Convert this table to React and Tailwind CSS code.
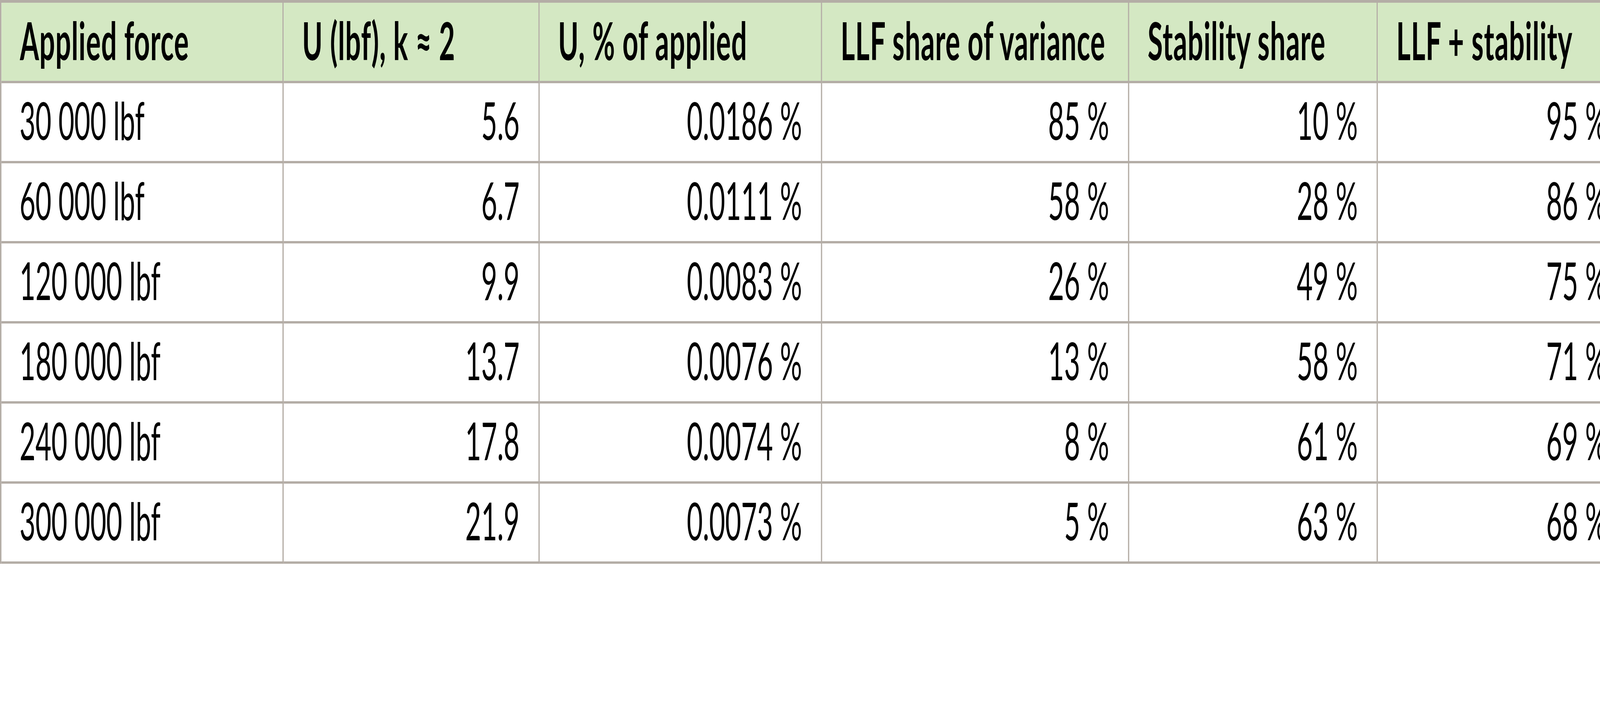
const headers = [
  "Applied force",
  "U (lbf), k ≈ 2",
  "U, % of applied",
  "LLF share of variance",
  "Stability share",
  "LLF + stability",
]

const rows = [
  ["30 000 lbf", "5.6", "0.0186 %", "85 %", "10 %", "95 %"],
  ["60 000 lbf", "6.7", "0.0111 %", "58 %", "28 %", "86 %"],
  ["120 000 lbf", "9.9", "0.0083 %", "26 %", "49 %", "75 %"],
  ["180 000 lbf", "13.7", "0.0076 %", "13 %", "58 %", "71 %"],
  ["240 000 lbf", "17.8", "0.0074 %", "8 %", "61 %", "69 %"],
  ["300 000 lbf", "21.9", "0.0073 %", "5 %", "63 %", "68 %"],
]

// the sheet is laid out for a 7800px wide frame; squeeze it to the real window width
const fit = typeof window !== "undefined" ? Math.min(1, window.innerWidth / 7800) : 1

export default function App() {
  return (
    <main className="w-screen h-screen overflow-hidden bg-white text-black font-['Lato','Open_Sans',sans-serif] text-[134px] leading-none">
      <div className="w-[7800px] overflow-hidden origin-top-left" style={{ transform: `scaleX(${fit})` }}>
        <div className="grid w-max grid-cols-[1376px_1248px_1377px_1497px_1212px_1216px] border-l-[7px] border-t-[7px] border-[#b4ada6]">
          {/* header row */}
          {headers.map((h) => (
            <div
              key={h}
              className="h-[206px] flex items-center pl-[90px] pr-[88px] pb-[8px] bg-[#d4e8c3] border-r-[6px] border-b-[6px] border-[#b4ada6] font-bold tracking-[2px] whitespace-nowrap"
            >
              {h}
            </div>
          ))}

          {/* data rows */}
          {rows.map((r) =>
            r.map((cell, j) => (
              <div
                key={r[0] + j}
                className={
                  j === 0
                    ? "h-[205px] flex items-center justify-start pl-[88px] pr-[88px] pb-[12px] border-r-[6px] border-b-[6px] border-[#b4ada6] whitespace-nowrap"
                    : "h-[205px] flex items-center justify-end pl-[88px] pr-[92px] pb-[12px] border-r-[6px] border-b-[6px] border-[#b4ada6] whitespace-nowrap"
                }
              >
                {cell}
              </div>
            ))
          )}
        </div>
      </div>
    </main>
  )
}
